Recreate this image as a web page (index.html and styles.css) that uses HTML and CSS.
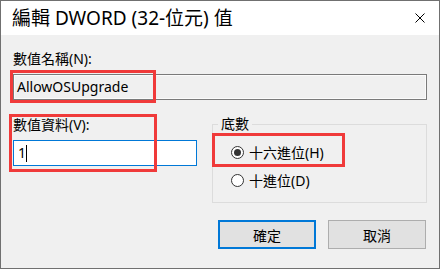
FILE: index.html
```html
<!DOCTYPE html>
<html lang="zh-Hant">
<head>
<meta charset="utf-8">
<title>編輯 DWORD (32-位元) 值</title>
<link rel="stylesheet" href="styles.css">
</head>
<body>
<div class="window">
  <div class="titlebar">
    <span class="title">編輯 DWORD (32-位元) 值</span>
    <svg class="close" width="10" height="10" viewBox="0 0 10 10"><path d="M0.5 0.5L9.5 9.5M9.5 0.5L0.5 9.5" stroke="#000" stroke-width="1" fill="none"/></svg>
  </div>
  <div class="content">
    <div class="label first">數值名稱(N):</div>
    <div class="namebox">AllowOSUpgrade</div>
    <div class="row">
      <div class="col">
        <div class="label">數值資料(V):</div>
        <div class="valuebox">1<span class="caret"></span></div>
      </div>
      <fieldset class="group">
        <legend>底數</legend>
        <div class="radio first-radio"><span class="dot on"></span>十六進位(H)</div>
        <div class="radio"><span class="dot"></span>十進位(D)</div>
      </fieldset>
    </div>
    <div class="buttons">
      <div class="btn default">確定</div>
      <div class="btn">取消</div>
    </div>
  </div>
  <div class="mark mark1"></div>
  <div class="mark mark2"></div>
  <div class="mark mark3"></div>
</div>
</body>
</html>
```
FILE: styles.css
```css
html, body {
  margin: 0;
  padding: 0;
}
body {
  font-family: "Noto Sans", "Noto Sans CJK TC", sans-serif;
  font-size: 14px;
  color: #000;
  background: #f0f0f0;
}
.window {
  position: relative;
  width: 440px;
  height: 269px;
  box-sizing: border-box;
  border: 1px solid #707070;
  background: #f0f0f0;
  display: flex;
  flex-direction: column;
}
.titlebar {
  height: 34px;
  background: #fff;
  display: flex;
  align-items: center;
  justify-content: space-between;
  padding: 0 14px 0 11px;
}
.title {
  font-size: 19px;
  line-height: 24px;
}
.close {
  display: block;
}
.content {
  padding: 0 12px;
}
.label {
  line-height: 18px;
}
.label.first {
  margin-top: 15px;
}
.namebox {
  margin-top: 6px;
  height: 26px;
  box-sizing: border-box;
  border: 1px solid #7a7a7a;
  box-shadow: inset 0 0 0 1px #fbfbfb;
  background: #f0f0f0;
  padding-left: 3px;
  line-height: 24px;
}
.row {
  margin-top: 16px;
  display: grid;
  grid-template-columns: 184px 1fr;
  column-gap: 15px;
  align-items: start;
}
.valuebox {
  margin-top: 6px;
  height: 26px;
  box-sizing: border-box;
  border: 1px solid #0078d7;
  background: #fff;
  padding-left: 4px;
  line-height: 24px;
  display: flex;
  align-items: center;
}
.caret {
  display: inline-block;
  width: 1px;
  height: 17px;
  background: #000;
  margin-left: 0;
}
.group {
  margin: 0;
  min-width: 0;
  border: 1px solid #dcdcdc;
  padding: 0 0 12px 5px;
}
.group legend {
  padding: 0 3px;
  line-height: 16px;
}
.radio {
  display: flex;
  align-items: center;
  height: 20px;
  margin-top: 8px;
  padding-left: 13px;
}
.radio.first-radio {
  margin-top: 10px;
}
.dot {
  width: 13px;
  height: 13px;
  box-sizing: border-box;
  border: 1px solid #333;
  border-radius: 50%;
  background: #fff;
  margin-right: 5px;
  position: relative;
}
.dot.on::after {
  content: "";
  position: absolute;
  left: 2px;
  top: 2px;
  width: 7px;
  height: 7px;
  border-radius: 50%;
  background: #333;
}
.buttons {
  margin-top: 17px;
  display: flex;
  justify-content: flex-end;
  gap: 12px;
  padding-right: 1px;
}
.btn {
  width: 98px;
  height: 29px;
  box-sizing: border-box;
  border: 1px solid #adadad;
  background: #e1e1e1;
  display: flex;
  align-items: center;
  justify-content: center;
}
.btn.default {
  border: 2px solid #0078d7;
}
.mark {
  position: absolute;
  box-sizing: border-box;
  border: 3px solid #f03a3a;
}
.mark1 {
  left: 9px;
  top: 69px;
  width: 146px;
  height: 33px;
}
.mark2 {
  left: 8px;
  top: 113px;
  width: 148px;
  height: 58px;
}
.mark3 {
  left: 211px;
  top: 132px;
  width: 133px;
  height: 34px;
}
```
